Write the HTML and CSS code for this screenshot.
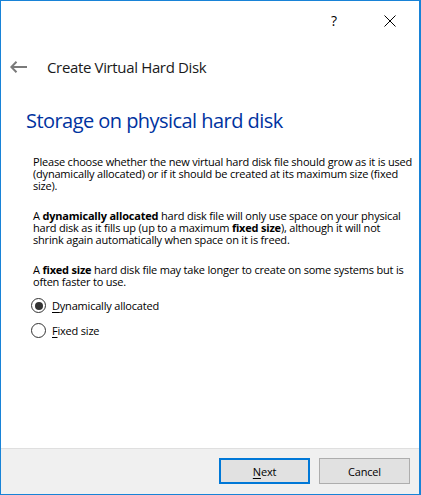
FILE: index.html
```html
<!DOCTYPE html>
<html>
<head>
<meta charset="utf-8">
<link rel="stylesheet" href="styles.css">
</head>
<body>
<div class="window">
  <div class="titlebar">
    <span class="help">?</span>
    <span class="close">
      <svg width="12" height="12" viewBox="0 0 12 12"><path d="M0.5 0.5 L11.5 11.5 M11.5 0.5 L0.5 11.5" stroke="#000" stroke-width="1" fill="none"/></svg>
    </span>
  </div>
  <div class="header">
    <svg class="back" width="18" height="12" viewBox="0 0 18 12"><path d="M1.5 6 H17 M6.5 0.8 L1.3 6 L6.5 11.2" stroke="#7a7a7a" stroke-width="2" fill="none"/></svg>
    <span class="header-title">Create Virtual Hard Disk</span>
  </div>
  <div class="content">
    <h1 class="heading">Storage on physical hard disk</h1>
    <div class="body">
      <p>Please choose whether the new virtual hard disk file should grow as it is used<br>(dynamically allocated) or if it should be created at its maximum size (fixed<br>size).</p>
      <p>A <b>dynamically allocated</b> hard disk file will only use space on your physical<br>hard disk as it fills up (up to a maximum <b>fixed size</b>), although it will not<br>shrink again automatically when space on it is freed.</p>
      <p>A <b>fixed size</b> hard disk file may take longer to create on some systems but is<br>often faster to use.</p>
    </div>
    <div class="options">
      <label class="radio"><span class="circle checked"></span><span><u>D</u>ynamically allocated</span></label>
      <label class="radio"><span class="circle"></span><span><u>F</u>ixed size</span></label>
    </div>
  </div>
  <div class="footer">
    <button class="btn default"><u>N</u>ext</button>
    <button class="btn">Cancel</button>
  </div>
</div>
</body>
</html>
```

FILE: styles.css
```css
html, body {
  margin: 0;
  padding: 0;
  background: #ffffff;
}
.window {
  width: 421px;
  height: 495px;
  box-sizing: border-box;
  border: 1px solid #1883d7;
  border-right-width: 2px;
  display: flex;
  flex-direction: column;
  background: #ffffff;
  font-family: "Open Sans", "Noto Sans", sans-serif;
  color: #000;
}
.titlebar {
  height: 40px;
  display: flex;
  align-items: center;
  justify-content: flex-end;
  padding-right: 23px;
}
.help {
  font-size: 14px;
  margin-right: 47px;
  line-height: 1;
}
.close {
  display: flex;
  width: 12px;
  height: 12px;
}
.header {
  height: 52px;
  display: flex;
  align-items: center;
  padding-left: 9px;
}
.back {
  display: block;
}
.header-title {
  margin-left: 19px;
  font-size: 15px;
  color: #1a1a1a;
  letter-spacing: -0.35px;
}
.content {
  padding-left: 25px;
}
.heading {
  margin: 14px 0 0 0;
  font-size: 20px;
  font-weight: normal;
  color: #0033a0;
  line-height: 28px;
  letter-spacing: -0.55px;
}
.body {
  padding-left: 7px;
  margin-top: 21px;
  font-size: 11px;
  line-height: 12px;
  letter-spacing: -0.2px;
}
.body p {
  margin: 0 0 18px 0;
}
.body p:last-child {
  margin-bottom: 0;
}
.body b {
  font-weight: bold;
}
.options {
  padding-left: 5px;
  display: flex;
  flex-direction: column;
  gap: 10px;
  margin-top: 10px;
}
.radio {
  display: flex;
  align-items: center;
  font-size: 11px;
  letter-spacing: -0.2px;
  height: 15px;
}
.circle {
  width: 13px;
  height: 13px;
  border: 1px solid #333;
  border-radius: 50%;
  margin-right: 6px;
  display: flex;
  align-items: center;
  justify-content: center;
  background: #fff;
}
.circle.checked::after {
  content: "";
  width: 8px;
  height: 8px;
  border-radius: 50%;
  background: #333;
}
.footer {
  margin-top: auto;
  height: 46px;
  box-sizing: border-box;
  border-top: 1px solid #dfdfdf;
  background: #f0f0f0;
  display: flex;
  justify-content: flex-end;
  align-items: flex-start;
  padding-top: 9px;
  padding-right: 9px;
  gap: 9px;
}
.btn {
  width: 91px;
  height: 26px;
  box-sizing: border-box;
  background: #e1e1e1;
  border: 1px solid #adadad;
  font-family: "Open Sans", "Noto Sans", sans-serif;
  font-size: 11px;
  color: #000;
  padding: 0;
  letter-spacing: -0.2px;
}
.btn.default {
  border: 2px solid #0078d7;
}
u {
  text-decoration-thickness: 1px;
  text-underline-offset: 2px;
}
```
